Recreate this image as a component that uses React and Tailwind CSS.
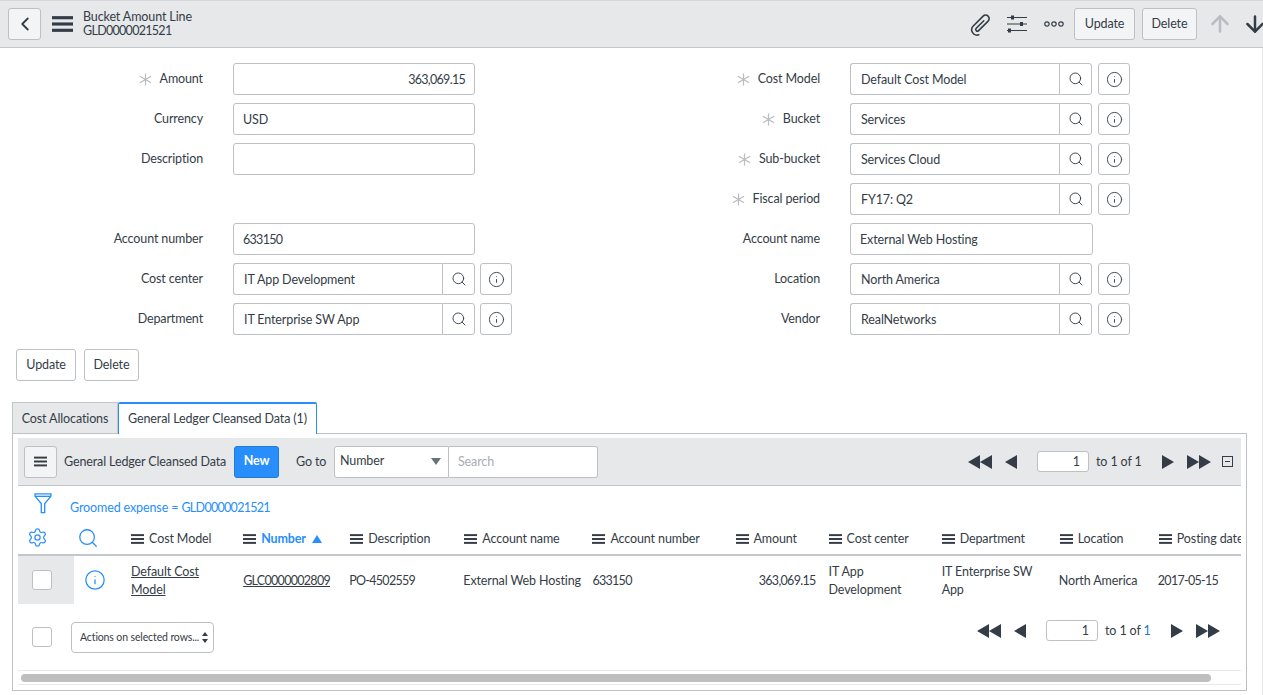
import React from 'react';
import { ArrowDown, ArrowUp, ChevronLeft, Info, Search, Settings } from 'lucide-react';

const Burger = ({ className }) => (
  <svg viewBox="0 0 16 12" className={className} fill="currentColor">
    <rect x="0" y="0" width="16" height="2.4" />
    <rect x="0" y="4.8" width="16" height="2.4" />
    <rect x="0" y="9.6" width="16" height="2.4" />
  </svg>
);

const Req = () => (
  <svg viewBox="0 0 14 14" className="w-[13px] h-[13px] mr-2 text-[#b9bcc0] shrink-0" stroke="currentColor" strokeWidth="1.3">
    <path d="M7 0.5V13.5M1 3.5L13 10.5M13 3.5L1 10.5" />
  </svg>
);

const Tri = ({ dir, className = 'w-[12px] h-[14px]' }) => (
  <svg viewBox="0 0 12 14" className={className} fill="#343d47">
    <path d={dir === 'l' ? 'M12 0V14L0 7Z' : 'M0 0V14L12 7Z'} />
  </svg>
);

const Double = ({ dir }) => (
  <svg viewBox="0 0 24 14" className="w-[24px] h-[14px]" fill="#343d47">
    {dir === 'l' ? <path d="M12 0V14L0 7ZM24 0V14L12 7Z" /> : <path d="M0 0V14L12 7ZM12 0V14L24 7Z" />}
  </svg>
);

function Label({ text, req }) {
  return (
    <div className="w-[203px] flex items-center justify-end">
      {req && <Req />}
      <span>{text}</span>
    </div>
  );
}

function Field({ label, value, req, right, lookup, wide, gap, num }) {
  return (
    <div className="flex items-center h-[32px] mb-[8px]">
      <Label text={label} req={req} />
      {lookup ? (
        <div className="ml-[30px] flex items-center">
          <div className="w-[209px] h-[32px] flex items-center pl-[10px] pt-[2px] border border-[#bdc0c4] rounded-l-[3px] border-r-0">{value}</div>
          <div className="w-[33px] h-[32px] flex items-center justify-center border border-[#bdc0c4] rounded-r-[3px]">
            <Search size={16} strokeWidth={1.4} />
          </div>
          <div className={`${gap ? 'ml-[6px]' : 'ml-[5px]'} w-[32px] h-[32px] flex items-center justify-center border border-[#bdc0c4] rounded-[3px]`}>
            <Info size={17} strokeWidth={1.3} />
          </div>
        </div>
      ) : (
        <div className={`ml-[30px] ${wide ? 'w-[243px]' : 'w-[242px]'} h-[32px] flex items-center px-[9px] pt-[2px] border border-[#bdc0c4] rounded-[3px] ${right ? 'justify-end' : ''} ${num ? 'tracking-[-0.7px]' : ''}`}>
          {value}
        </div>
      )}
    </div>
  );
}

const left = [
  { label: 'Amount', value: '363,069.15', req: true, right: true, num: true },
  { label: 'Currency', value: 'USD' },
  { label: 'Description', value: '' },
  null,
  { label: 'Account number', value: '633150', num: true },
  { label: 'Cost center', value: 'IT App Development', lookup: true },
  { label: 'Department', value: 'IT Enterprise SW App', lookup: true },
];

const rightCol = [
  { label: 'Cost Model', value: 'Default Cost Model', req: true, lookup: true, gap: true },
  { label: 'Bucket', value: 'Services', req: true, lookup: true, gap: true },
  { label: 'Sub-bucket', value: 'Services Cloud', req: true, lookup: true, gap: true },
  { label: 'Fiscal period', value: 'FY17: Q2', req: true, lookup: true, gap: true },
  { label: 'Account name', value: 'External Web Hosting', wide: true },
  { label: 'Location', value: 'North America', lookup: true, gap: true },
  { label: 'Vendor', value: 'RealNetworks', lookup: true, gap: true },
];

const columns = [
  { name: 'Cost Model', w: 'w-[112px]' },
  { name: 'Number', w: 'w-[107px]', sorted: true },
  { name: 'Description', w: 'w-[114px]' },
  { name: 'Account name', w: 'w-[128px]' },
  { name: 'Account number', w: 'w-[143px]' },
  { name: 'Amount', w: 'w-[93px]' },
  { name: 'Cost center', w: 'w-[113px]' },
  { name: 'Department', w: 'w-[118px]' },
  { name: 'Location', w: 'w-[99px]' },
  { name: 'Posting date', w: 'w-[92px]' },
];

function Pager({ blue }) {
  return (
    <div className="flex items-center">
      <Double dir="l" />
      <div className="ml-[13px]"><Tri dir="l" /></div>
      <div className="ml-[20px] w-[52px] h-[21px] bg-white border border-[#bdc0c4] rounded-[3px] flex items-center justify-end pr-[8px] pt-[1px]">1</div>
      <span className="ml-[7px] w-[47px] whitespace-nowrap pt-[1px]">to 1 of <span className={blue ? 'text-[#1f7bc0]' : ''}>1</span></span>
      <div className="ml-[19px]"><Tri dir="r" /></div>
      <div className="ml-[13px]"><Double dir="r" /></div>
    </div>
  );
}

export default function App() {
  return (
    <div className="w-[1263px] h-[695px] overflow-hidden bg-white text-[12.5px] tracking-[-0.12px] text-[#343d47] font-['Lato','Liberation_Sans',sans-serif]">
      <div className="h-[48px] bg-[#e6e8ea] border-y border-[#c4c7ca] border-t-[#d5d7da] flex items-center pl-[8px] pr-0">
        <button className="w-[33px] h-[32px] bg-[#f3f4f5] border border-[#bdc0c4] rounded-[3px] flex items-center justify-center">
          <ChevronLeft size={22} strokeWidth={2} />
        </button>
        <Burger className="ml-[11px] w-[21px] h-[16px]" />
        <div className="ml-[10px] leading-[14px] pb-[1px]">
          <div>Bucket Amount Line</div>
          <div className="tracking-[-0.7px]">GLD0000021521</div>
        </div>
        <div className="ml-auto flex items-center">
          <svg viewBox="0 0 16 28" className="w-[15px] h-[26px] rotate-[45deg]" fill="none" stroke="currentColor" strokeWidth="1.7" strokeLinecap="round">
            <path d="M8 9V20.5a1.8 1.8 0 0 0 3.6 0V6a3.8 3.8 0 0 0-7.6 0V21a5.8 5.8 0 0 0 11 2.5" />
          </svg>
          <svg viewBox="0 0 20 18" className="ml-[19px] w-[20px] h-[18px]" stroke="currentColor" fill="currentColor" strokeWidth="1.1">
            <path d="M0 2.5H20M0 9H20M0 15.5H20" />
            <rect x="4" y="0.5" width="3" height="4" strokeWidth="0" />
            <rect x="13" y="7" width="3" height="4" strokeWidth="0" />
            <rect x="1" y="13.5" width="3" height="4" strokeWidth="0" />
          </svg>
          <svg viewBox="0 0 20 6" className="ml-[17px] w-[20px] h-[6px]" stroke="currentColor" fill="none" strokeWidth="1.2">
            <circle cx="3" cy="3" r="2.2" />
            <circle cx="10" cy="3" r="2.2" />
            <circle cx="17" cy="3" r="2.2" />
          </svg>
          <button className="ml-[10px] w-[61px] h-[32px] pt-[1px] bg-[#f3f4f5] border border-[#bdc0c4] rounded-[3px]">Update</button>
          <button className="ml-[7px] w-[55px] h-[32px] pt-[1px] bg-[#f3f4f5] border border-[#bdc0c4] rounded-[3px]">Delete</button>
          <ArrowUp size={26} strokeWidth={2.3} className="ml-[10px] text-[#b9bcc0]" />
          <ArrowDown size={26} strokeWidth={2.3} className="ml-[9px] mr-[-5px]" />
        </div>
      </div>

      <div className="h-[647px] border-r border-[#e4e6e8]">
        <div className="pt-[15px] flex">
          <div className="w-[617px]">
            {left.map((f, i) => (f ? <Field key={f.label} {...f} /> : <div key={i} className="h-[40px]" />))}
          </div>
          <div>
            {rightCol.map((f) => <Field key={f.label} {...f} />)}
          </div>
        </div>

        <div className="pl-[16px] pt-[6px] flex gap-[8px]">
          <button className="w-[60px] h-[32px] pt-[1px] border border-[#bdc0c4] rounded-[3px]">Update</button>
          <button className="w-[55px] h-[32px] pt-[1px] border border-[#bdc0c4] rounded-[3px]">Delete</button>
        </div>

        <div className="ml-[12px] mt-[21px] flex h-[31px]">
          <div className="w-[106px] pt-[3px] bg-[#e6e8ea] border border-[#c4c7ca] border-b-0 flex items-center justify-center">Cost Allocations</div>
          <div className="w-[199px] h-[32px] pt-[1px] bg-white border border-[#278efc] border-t-2 border-b-0 rounded-t-[2px] flex items-center justify-center relative">General Ledger Cleansed Data (1)</div>
        </div>

        <div className="ml-[12px] w-[1235px] h-[258px] border border-[#bdc0c4] pt-[4px] pl-[5px] overflow-hidden">
          <div className="w-[1223px] h-[48px] bg-[#e6e8ea] border-b border-[#c4c7ca] flex items-center pl-[6px]">
            <button className="w-[33px] h-[32px] bg-[#f3f4f5] border border-[#bdc0c4] rounded-[3px] flex items-center justify-center">
              <Burger className="w-[13px] h-[11px]" />
            </button>
            <span className="ml-[7px] w-[162px] pt-[1px] whitespace-nowrap">General Ledger Cleansed Data</span>
            <button className="ml-[8px] w-[45px] h-[32px] bg-[#278efc] text-white font-bold border border-[#1f7bd8] rounded-[3px]">New</button>
            <span className="ml-[17px] w-[29px] pt-[1px] whitespace-nowrap">Go to</span>
            <div className="ml-[9px] w-[115px] h-[32px] bg-white border border-[#bdc0c4] rounded-l-[3px] flex items-center justify-between px-[5px]">
              <span>Number</span>
              <span className="w-0 h-0 border-x-[5px] border-x-transparent border-t-[7px] border-t-[#6b7178] mr-[2px]"></span>
            </div>
            <div className="w-[149px] h-[32px] pt-[2px] bg-white border border-l-0 border-[#bdc0c4] rounded-r-[3px] flex items-center px-[9px] text-[#a9adb2]">Search</div>
            <div className="ml-auto flex items-center">
              <Pager />
              <div className="ml-[11px] mr-[8px] w-[11px] h-[11px] border border-[#343d47] flex items-center justify-center">
                <span className="w-[5px] h-px bg-[#343d47]"></span>
              </div>
            </div>
          </div>

          <div className="flex items-center h-[35px] pt-[10px] pl-[16px]">
            <svg viewBox="0 0 18 22" className="w-[18px] h-[21px] mb-[10px]" fill="none" stroke="#278efc" strokeWidth="1.4">
              <path d="M0.7 1H17.3V3.5L10.8 11V20.5H7.2V11L0.7 3.5Z" />
              <path d="M0.7 3.5H17.3" />
            </svg>
            <span className="ml-[18px] text-[#278efc]">Groomed expense = <span className="tracking-[-0.7px]">GLD0000021521</span></span>
          </div>

          <div className="w-[1223px] overflow-hidden">
            <table className="table-fixed border-collapse w-[1225px]">
              <thead>
                <tr className="h-[34px] border-b-2 border-[#c4c7ca]">
                  <th className="w-[56px] p-0 font-normal">
                    <Settings size={21} strokeWidth={1.4} className="text-[#278efc] ml-[9px]" />
                  </th>
                  <th className="w-[49px] p-0 font-normal">
                    <Search size={22} strokeWidth={1.4} className="text-[#278efc] ml-[3px]" />
                  </th>
                  {columns.map((c) => (
                    <th key={c.name} className={`${c.w} p-0 pt-[3px] font-normal text-left whitespace-nowrap`}>
                      <div className="flex items-center pl-[8px]">
                        <Burger className="w-[13px] h-[10px] shrink-0" />
                        <span className={`ml-[5px] ${c.sorted ? 'text-[#278efc] font-bold' : ''}`}>{c.name}</span>
                        {c.sorted && <span className="ml-[6px] w-0 h-0 border-x-[5px] border-x-transparent border-b-[8px] border-b-[#278efc]"></span>}
                      </div>
                    </th>
                  ))}
                </tr>
              </thead>
              <tbody>
                <tr className="h-[49px] leading-[18px]">
                  <td className="p-0 bg-[#e6e8ea]">
                    <div className="ml-[14px] w-[20px] h-[20px] bg-white border border-[#bdc0c4] rounded-[3px]"></div>
                  </td>
                  <td className="p-0">
                    <Info size={22} strokeWidth={1.4} className="text-[#278efc] ml-[10px]" />
                  </td>
                  <td className="px-[8px] pt-[1px] pb-0"><span className="underline">Default Cost Model</span></td>
                  <td className="px-[8px] pt-[1px] pb-0"><span className="underline tracking-[-0.7px]">GLC0000002809</span></td>
                  <td className="pl-[7px] pr-0 pt-[1px] pb-0 tracking-[-0.7px]">PO-4502559</td>
                  <td className="pl-[7px] pt-[1px] pb-0 whitespace-nowrap">External Web Hosting</td>
                  <td className="px-[8px] pt-[1px] pb-0 tracking-[-0.7px]">633150</td>
                  <td className="pl-0 pr-[5px] pt-[1px] pb-0 text-right tracking-[-0.7px]">363,069.15</td>
                  <td className="px-[8px] pt-[1px] pb-0">IT App Development</td>
                  <td className="px-[8px] pt-[1px] pb-0">IT Enterprise SW App</td>
                  <td className="pl-[7px] pt-[1px] pb-0 whitespace-nowrap">North America</td>
                  <td className="pl-[7px] pr-0 pt-[1px] pb-0 whitespace-nowrap tracking-[-0.7px]">2017-05-15</td>
                </tr>
              </tbody>
            </table>
          </div>

          <div className="flex items-center h-[66px] pl-[14px]">
            <div className="w-[20px] h-[20px] border border-[#bdc0c4] rounded-[3px]"></div>
            <div className="ml-[19px] w-[143px] h-[31px] border border-[#bdc0c4] rounded-[4px] flex items-center justify-between pl-[8px] pr-[5px] text-[10.5px] whitespace-nowrap">
              <span className="pt-[1px]">Actions on selected rows...</span>
              <svg viewBox="0 0 6 11" className="w-[6px] h-[11px] shrink-0" fill="#343d47"><path d="M3 0L6 4H0ZM3 11L0 7H6Z" /></svg>
            </div>
            <div className="ml-auto mr-[26px] mb-[13px]"><Pager blue /></div>
          </div>

          <div className="w-[1223px] h-[15px] border-y border-[#e6e8ea] flex items-center pl-[3px]">
            <div className="w-[1190px] h-[8px] rounded-full bg-[#bfbfbf]"></div>
          </div>
        </div>
      </div>
    </div>
  );
}
